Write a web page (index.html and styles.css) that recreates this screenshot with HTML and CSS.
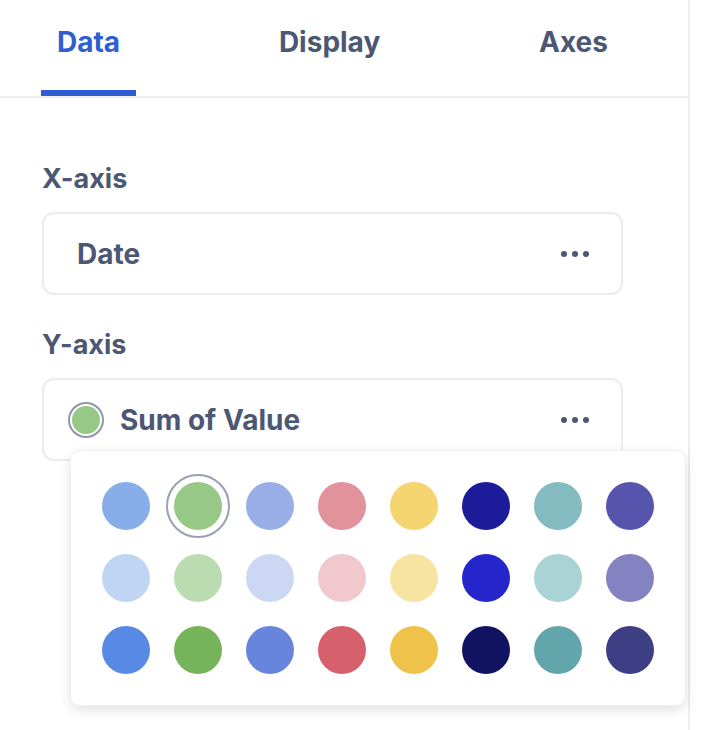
FILE: index.html
```html
<!DOCTYPE html>
<html lang="en">
<head>
    <meta charset="UTF-8">
    <meta name="viewport" content="width=device-width, initial-scale=1.0">
    <title>Chart settings</title>
    <link rel="stylesheet" href="styles.css">
</head>
<body>
    <div class="sidebar">
        <div class="tabs">
            <div class="tab active">Data</div>
            <div class="tab">Display</div>
            <div class="tab">Axes</div>
        </div>
        <div class="content">
            <div class="section-label">X-axis</div>
            <div class="field">
                <span class="field-name">Date</span>
                <span class="more"><i></i><i></i><i></i></span>
            </div>

            <div class="section-label y-label">Y-axis</div>
            <div class="field-wrap">
                <div class="field field-series">
                    <span class="swatch-ring"><span class="swatch"></span></span>
                    <span class="field-name">Sum of Value</span>
                    <span class="more"><i></i><i></i><i></i></span>
                </div>
                <!-- color picker popover -->
                <div class="picker">
                    <span class="dot" style="background:#88aee9"></span>
                    <span class="dot selected" style="background:#98c885"></span>
                    <span class="dot" style="background:#99aee6"></span>
                    <span class="dot" style="background:#e1929a"></span>
                    <span class="dot" style="background:#f4d570"></span>
                    <span class="dot" style="background:#1c1c9b"></span>
                    <span class="dot" style="background:#84bbc0"></span>
                    <span class="dot" style="background:#5654ac"></span>

                    <span class="dot" style="background:#c0d4f4"></span>
                    <span class="dot" style="background:#badcb0"></span>
                    <span class="dot" style="background:#ccd7f3"></span>
                    <span class="dot" style="background:#f0c8ce"></span>
                    <span class="dot" style="background:#f8e4a2"></span>
                    <span class="dot" style="background:#2525cc"></span>
                    <span class="dot" style="background:#aad3d6"></span>
                    <span class="dot" style="background:#8482c0"></span>

                    <span class="dot" style="background:#5889e4"></span>
                    <span class="dot" style="background:#76b45c"></span>
                    <span class="dot" style="background:#6885dd"></span>
                    <span class="dot" style="background:#d6606c"></span>
                    <span class="dot" style="background:#efc349"></span>
                    <span class="dot" style="background:#121263"></span>
                    <span class="dot" style="background:#62a5aa"></span>
                    <span class="dot" style="background:#3e3e84"></span>
                </div>
            </div>
        </div>
    </div>
</body>
</html>
```

FILE: styles.css
```css
body {
    margin: 0;
    padding: 0;
    background-color: #ffffff;
    font-family: Inter, "Noto Sans", sans-serif;
    color: #4c5773;
}
.sidebar {
    width: 688px;
    height: 730px;
    border-right: 2px solid #ededed;
}
.tabs {
    display: flex;
    justify-content: space-between;
    height: 96px;
    padding: 0 64px 0 41px;
    border-bottom: 2px solid #eeeeee;
}
.tab {
    box-sizing: border-box;
    height: 96px;
    padding: 25px 16px 0;
    font-size: 28px;
    line-height: 34px;
    font-weight: 700;
    color: #4c5773;
    border-bottom: 6px solid transparent;
}
.tab.active {
    color: #2e5ed1;
    border-bottom-color: #2e5ed1;
}
.content {
    padding: 65px 65px 0 42px;
}
.section-label {
    font-size: 27px;
    line-height: 32px;
    font-weight: 700;
    margin-bottom: 17px;
}
.y-label {
    margin-top: 34px;
}
.field {
    box-sizing: border-box;
    height: 83px;
    display: flex;
    align-items: center;
    padding: 0 32px 0 33px;
    border: 2px solid #ececec;
    border-radius: 12px;
}
.field-name {
    flex: 1;
    font-size: 28px;
    font-weight: 700;
}
.more {
    display: flex;
    gap: 5px;
}
.more i {
    width: 6px;
    height: 6px;
    border-radius: 50%;
    background-color: #4c5773;
}
.field-wrap {
    position: relative;
}
.field-series {
    padding-left: 24px;
}
.swatch-ring {
    box-sizing: border-box;
    width: 36px;
    height: 36px;
    padding: 2px;
    margin-right: 16px;
    border: 2px solid #8f96a8;
    border-radius: 50%;
}
.swatch {
    display: block;
    width: 28px;
    height: 28px;
    border-radius: 50%;
    background-color: #98c885;
}
.picker {
    position: absolute;
    top: 72px;
    left: 28px;
    display: grid;
    grid-template-columns: repeat(8, 48px);
    gap: 24px;
    padding: 31px;
    background-color: #ffffff;
    border: 1px solid #f0f0f0;
    border-radius: 10px;
    box-shadow: 0 4px 12px rgba(0, 0, 0, 0.12);
}
.dot {
    width: 48px;
    height: 48px;
    border-radius: 50%;
}
.dot.selected {
    outline: 2px solid #9aa0b0;
    outline-offset: 6px;
}
```
